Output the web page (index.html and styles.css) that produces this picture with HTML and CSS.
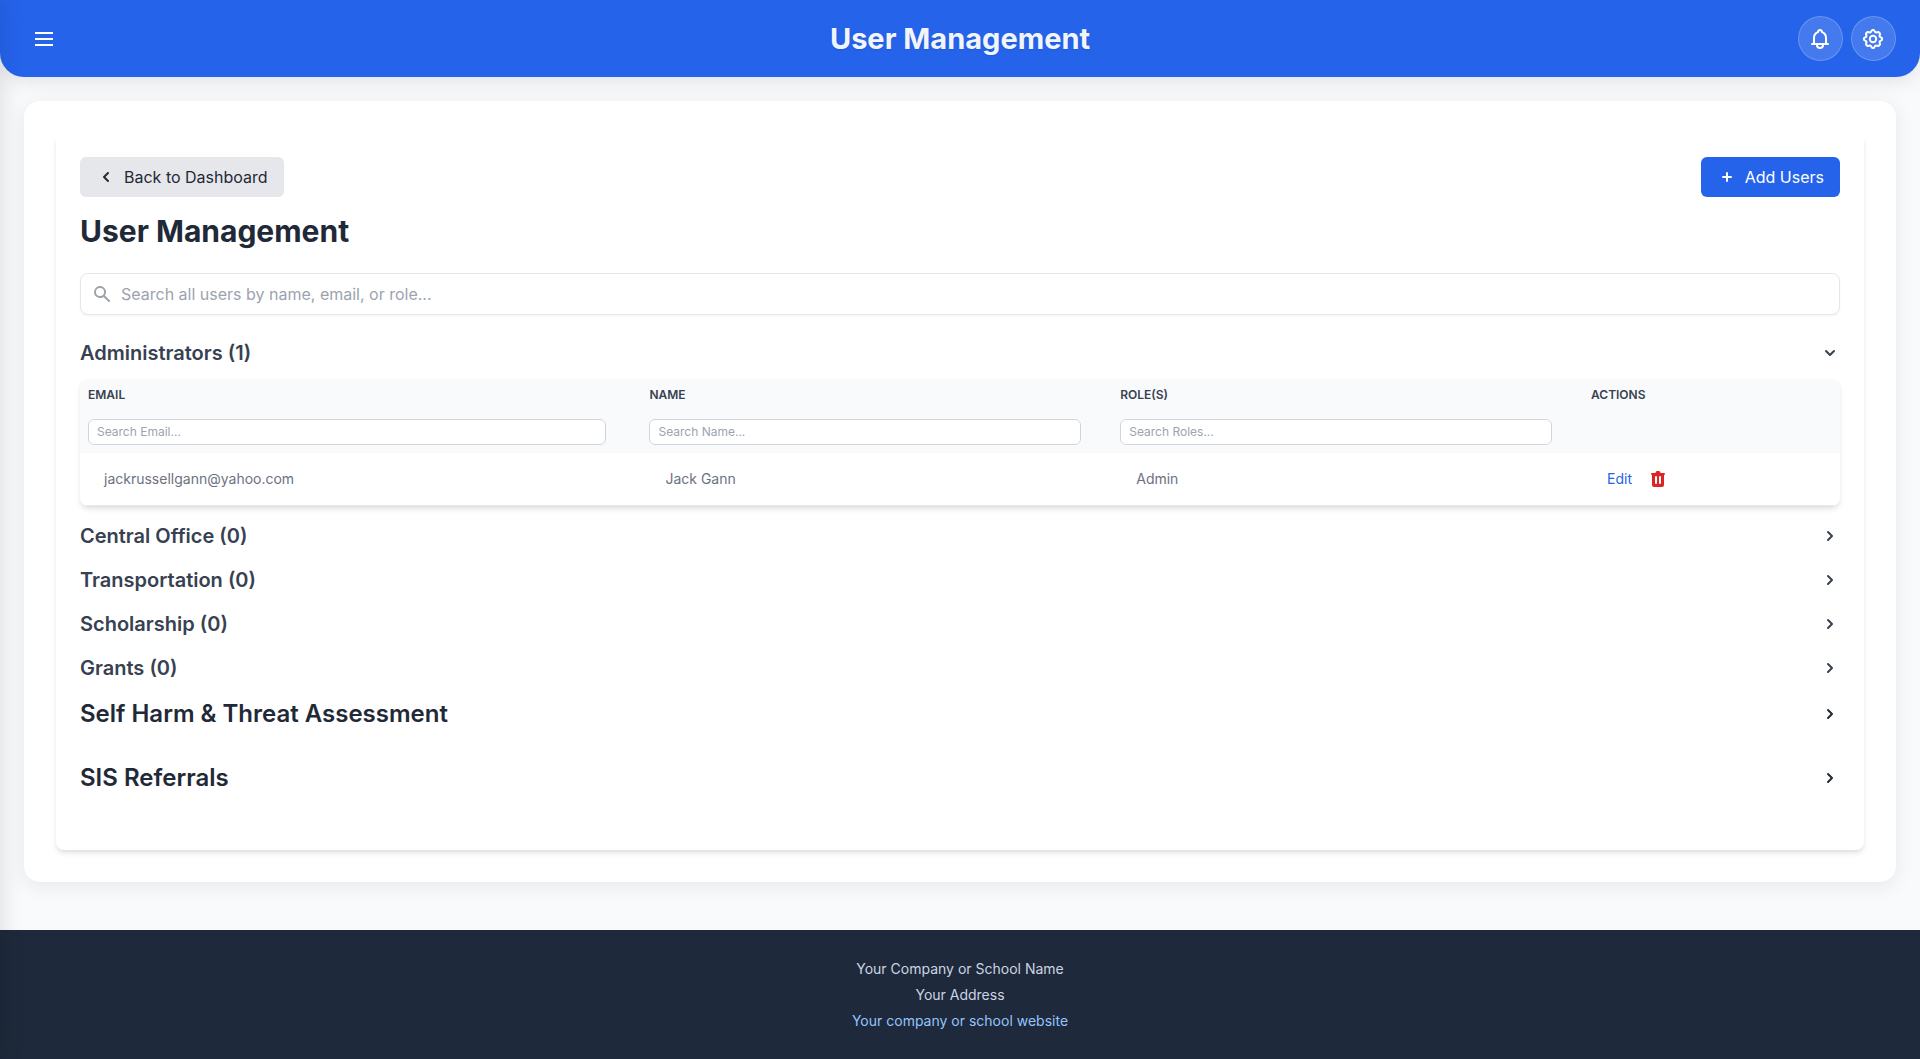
FILE: index.html
```
<!DOCTYPE html>
<html lang="en">
<head>
<meta charset="utf-8">
<meta name="viewport" content="width=device-width, initial-scale=1">
<title>User Management</title>
<link rel="stylesheet" href="styles.css">
</head>
<body>
<!-- closed side menu, only its shadow shows -->
<nav class="sidebar" aria-hidden="true"></nav>

<header class="header">
	<button class="menu-btn" type="button" aria-label="Open menu">
		<svg width="24" height="24" viewBox="0 0 24 24" fill="none" stroke="currentColor" stroke-width="2" stroke-linecap="square"><path d="M4 6h16M4 12h16M4 18h16"/></svg>
	</button>
	<h1 class="header-title">User Management</h1>
	<div class="header-actions">
		<button class="round-btn" type="button" aria-label="Notifications">
			<svg width="21" height="21" viewBox="0 -1 21 21" fill="none" stroke="currentColor" stroke-width="2" stroke-linejoin="round" stroke-linecap="round"><path d="M2 15h16M4 15V9c0-3 1.500-5 4-6 .2-1.200 1-2 2-2s1.800.8 2 2c2.500 1 4 3 4 6v6"/><path d="M7 16c0 2 1.300 3 3 3s3-1 3-3"/></svg>
		</button>
		<button class="round-btn" type="button" aria-label="Settings">
			<svg width="21" height="21" viewBox="0 -1 21 21" fill="none" stroke="currentColor" stroke-width="2" stroke-linejoin="round"><circle cx="10" cy="10" r="3.200"/><path d="M9.200 1h1.600L12.500 3.500 15.500 3 17 4.500 16.500 7.500 19 9.200v1.600L16.500 12.500 17 15.500 15.500 17 12.500 16.500 10.800 19H9.200L7.500 16.500 4.500 17 3 15.500 3.500 12.500 1 10.800V9.200L3.500 7.500 3 4.500 4.500 3 7.500 3.500z"/></svg>
		</button>
	</div>
</header>

<main class="page">
	<div class="panel">
		<div class="toolbar">
			<button class="btn btn-gray" type="button">
				<svg width="20" height="20" viewBox="0 0 20 20" fill="currentColor"><path fill-rule="evenodd" d="M12.707 5.293a1 1 0 010 1.414L9.414 10l3.293 3.293a1 1 0 01-1.414 1.414l-4-4a1 1 0 010-1.414l4-4a1 1 0 011.414 0z"/></svg>
				Back to Dashboard
			</button>
			<button class="btn btn-blue" type="button">
				<svg width="20" height="20" viewBox="0 0 20 20" fill="currentColor"><path d="M10 5a1 1 0 011 1v3h3a1 1 0 110 2h-3v3a1 1 0 11-2 0v-3H6a1 1 0 110-2h3V6a1 1 0 011-1z"/></svg>
				Add Users
			</button>
		</div>

		<h2 class="title">User Management</h2>

		<div class="search">
			<svg class="search-icon" width="20" height="20" viewBox="0 0 20 20" fill="currentColor"><path fill-rule="evenodd" d="M8 4a4 4 0 100 8 4 4 0 000-8zM2 8a6 6 0 1110.890 3.476l4.817 4.817a1 1 0 01-1.414 1.414l-4.816-4.816A6 6 0 012 8z"/></svg>
			<input class="search-input" type="text" aria-label="Search all users" placeholder="Search all users by name, email, or role...">
		</div>

		<section class="group">
			<button class="group-toggle" type="button" aria-expanded="true">
				Administrators (1)
				<svg width="20" height="20" viewBox="0 0 20 20" fill="currentColor"><path d="M5.293 7.293a1 1 0 011.414 0L10 10.586l3.293-3.293a1 1 0 111.414 1.414l-4 4a1 1 0 01-1.414 0l-4-4a1 1 0 010-1.414z"/></svg>
			</button>
			<table class="users">
				<thead>
					<tr>
						<th class="col-email">Email</th>
						<th class="col-name">Name</th>
						<th class="col-role">Role(s)</th>
						<th>Actions</th>
					</tr>
					<tr>
						<td><input class="filter" type="text" aria-label="Search email" placeholder="Search Email..."></td>
						<td><input class="filter" type="text" aria-label="Search name" placeholder="Search Name..."></td>
						<td><input class="filter" type="text" aria-label="Search roles" placeholder="Search Roles..."></td>
						<td></td>
					</tr>
				</thead>
				<tbody>
					<tr>
						<td>jackrussellgann@yahoo.com</td>
						<td>Jack Gann</td>
						<td>Admin</td>
						<td>
							<div class="row-actions">
								<button class="edit" type="button">Edit</button>
								<button class="delete" type="button" aria-label="Delete Jack Gann">
									<svg width="20" height="20" viewBox="0 0 20 20" fill="currentColor"><path fill-rule="evenodd" d="M9 2a1 1 0 00-.894.553L7.382 4H4a1 1 0 000 2v10a2 2 0 002 2h8a2 2 0 002-2V6a1 1 0 100-2h-3.382l-.724-1.447A1 1 0 0011 2H9zM7 8a1 1 0 012 0v6a1 1 0 11-2 0V8zm5-1a1 1 0 00-1 1v6a1 1 0 102 0V8a1 1 0 00-1-1z"/></svg>
								</button>
							</div>
						</td>
					</tr>
				</tbody>
			</table>
		</section>

		<section class="group">
			<button class="group-toggle" type="button" aria-expanded="false">
				Central Office (0)
				<svg width="20" height="20" viewBox="0 0 20 20" fill="currentColor"><path d="M7.293 14.707a1 1 0 010-1.414L10.586 10 7.293 6.707a1 1 0 011.414-1.414l4 4a1 1 0 010 1.414l-4 4a1 1 0 01-1.414 0z"/></svg>
			</button>
		</section>
		<section class="group">
			<button class="group-toggle" type="button" aria-expanded="false">
				Transportation (0)
				<svg width="20" height="20" viewBox="0 0 20 20" fill="currentColor"><path d="M7.293 14.707a1 1 0 010-1.414L10.586 10 7.293 6.707a1 1 0 011.414-1.414l4 4a1 1 0 010 1.414l-4 4a1 1 0 01-1.414 0z"/></svg>
			</button>
		</section>
		<section class="group">
			<button class="group-toggle" type="button" aria-expanded="false">
				Scholarship (0)
				<svg width="20" height="20" viewBox="0 0 20 20" fill="currentColor"><path d="M7.293 14.707a1 1 0 010-1.414L10.586 10 7.293 6.707a1 1 0 011.414-1.414l4 4a1 1 0 010 1.414l-4 4a1 1 0 01-1.414 0z"/></svg>
			</button>
		</section>
		<section class="group">
			<button class="group-toggle" type="button" aria-expanded="false">
				Grants (0)
				<svg width="20" height="20" viewBox="0 0 20 20" fill="currentColor"><path d="M7.293 14.707a1 1 0 010-1.414L10.586 10 7.293 6.707a1 1 0 011.414-1.414l4 4a1 1 0 010 1.414l-4 4a1 1 0 01-1.414 0z"/></svg>
			</button>
		</section>

		<section class="group group-large">
			<button class="group-toggle" type="button" aria-expanded="false">
				Self Harm &amp; Threat Assessment
				<svg width="20" height="20" viewBox="0 0 20 20" fill="currentColor"><path d="M7.293 14.707a1 1 0 010-1.414L10.586 10 7.293 6.707a1 1 0 011.414-1.414l4 4a1 1 0 010 1.414l-4 4a1 1 0 01-1.414 0z"/></svg>
			</button>
		</section>
		<section class="group group-large">
			<button class="group-toggle" type="button" aria-expanded="false">
				SIS Referrals
				<svg width="20" height="20" viewBox="0 0 20 20" fill="currentColor"><path d="M7.293 14.707a1 1 0 010-1.414L10.586 10 7.293 6.707a1 1 0 011.414-1.414l4 4a1 1 0 010 1.414l-4 4a1 1 0 01-1.414 0z"/></svg>
			</button>
		</section>
	</div>
</main>

<footer class="footer">
	<p>Your Company or School Name</p>
	<p>Your Address</p>
	<p><a href="#">Your company or school website</a></p>
</footer>
</body>
</html>
```
FILE: styles.css
```
* {
	box-sizing: border-box;
}
body {
	margin: 0;
	min-height: 100vh;
	display: flex;
	flex-direction: column;
	background: #f8fafc;
	color: #1f2937;
	font-family: Inter, "Liberation Sans", sans-serif;
	font-size: 16px;
	line-height: 24px;
}
h1, h2, p {
	margin: 0;
}
button, input {
	font: inherit;
	color: inherit;
	margin: 0;
}
button {
	border: 0;
	padding: 0;
	background: none;
	cursor: pointer;
}
svg {
	display: block;
	flex-shrink: 0;
}
input::placeholder {
	color: #9ca3af;
	opacity: 1;
}

/* side menu */
.sidebar {
	position: fixed;
	top: 0;
	bottom: 0;
	left: -280px;
	width: 280px;
	z-index: 10;
	background: #fff;
	box-shadow: 4px 0 20px rgba(0, 0, 0, 0.1);
}

/* header */
.header {
	display: grid;
	grid-template-columns: 1fr auto 1fr;
	align-items: center;
	padding: 16px 24px;
	background: #2563eb;
	color: #fff;
	border-radius: 0 0 24px 24px;
	box-shadow: 0 4px 20px rgba(0, 0, 0, 0.1);
}
.menu-btn {
	justify-self: start;
	padding: 8px;
}
.header-title {
	font-size: 29px;
	line-height: 45px;
	font-weight: 700;
	color: #f1f5f9;
	text-shadow: 0 1px 2px rgba(0, 0, 0, 0.1);
}
.header-actions {
	justify-self: end;
	display: flex;
	gap: 8px;
}
.round-btn {
	display: flex;
	align-items: center;
	justify-content: center;
	width: 45px;
	height: 45px;
	border: 1px solid rgba(255, 255, 255, 0.2);
	border-radius: 50%;
	background: rgba(255, 255, 255, 0.15);
}

/* content */
.page {
	margin: 24px 24px 48px;
	padding: 32px;
	background: #fff;
	border-radius: 16px;
	box-shadow: 0 4px 20px rgba(0, 0, 0, 0.08);
}
.panel {
	padding: 24px;
	background: #fff;
	border-radius: 8px;
	box-shadow: 0 4px 6px -1px rgba(0, 0, 0, 0.1), 0 2px 4px -1px rgba(0, 0, 0, 0.06);
}
.toolbar {
	display: flex;
	justify-content: space-between;
	margin-bottom: 16px;
}
.btn {
	display: flex;
	align-items: center;
	gap: 8px;
	padding: 8px 16px;
	border-radius: 6px;
}
.btn-gray {
	background: #e5e7eb;
}
.btn-blue {
	background: #2563eb;
	color: #fff;
}
.title {
	margin-bottom: 24px;
	font-size: 30px;
	line-height: 36px;
	font-weight: 700;
}
.search {
	position: relative;
	margin-bottom: 24px;
}
.search-icon {
	position: absolute;
	left: 12px;
	top: 11px;
	color: #9ca3af;
}
.search-input {
	display: block;
	width: 100%;
	padding: 8px 16px 8px 40px;
	border: 1px solid #e5e7eb;
	border-radius: 8px;
	background: #fff;
	box-shadow: 0 1px 2px rgba(0, 0, 0, 0.05);
}

/* role groups */
.group {
	margin-bottom: 16px;
}
.group-toggle {
	display: flex;
	align-items: center;
	justify-content: space-between;
	width: 100%;
	font-size: 20px;
	line-height: 28px;
	font-weight: 600;
	color: #374151;
	text-align: left;
}
.group-large {
	margin-bottom: 32px;
}
.group-large .group-toggle {
	font-size: 24px;
	line-height: 32px;
	color: #1f2937;
}

/* users table */
.users {
	width: 100%;
	margin-top: 12px;
	table-layout: fixed;
	border-spacing: 0;
	border-radius: 8px;
	overflow: hidden;
	background: #fff;
	box-shadow: 0 4px 6px -1px rgba(0, 0, 0, 0.1), 0 2px 4px -1px rgba(0, 0, 0, 0.06);
}
.col-email {
	width: 31.9%;
}
.col-name, .col-role {
	width: 26.75%;
}
.users thead {
	background: #f9fafb;
}
.users th, .users thead td {
	padding: 8px;
}
.users th {
	font-size: 12px;
	line-height: 16px;
	font-weight: 600;
	color: #374151;
	text-align: left;
	text-transform: uppercase;
}
.filter {
	display: block;
	width: 95%;
	padding: 4px 8px;
	border: 1px solid #d1d5db;
	border-radius: 6px;
	background: #fff;
	font-size: 12px;
	line-height: 16px;
}
.users tbody td {
	padding: 16px 24px;
	border-bottom: 1px solid #e5e7eb;
	font-size: 14px;
	line-height: 20px;
	color: #6b7280;
}
.row-actions {
	display: flex;
	gap: 16px;
}
.edit {
	color: #2563eb;
}
.delete {
	color: #dc2626;
}

/* footer */
.footer {
	flex: 1;
	padding: 26px 24px 24px;
	background: #1e293b;
	color: #cbd5e1;
	font-size: 14px;
	line-height: 26px;
	text-align: center;
}
.footer a {
	color: #93c5fd;
	text-decoration: none;
}
```
